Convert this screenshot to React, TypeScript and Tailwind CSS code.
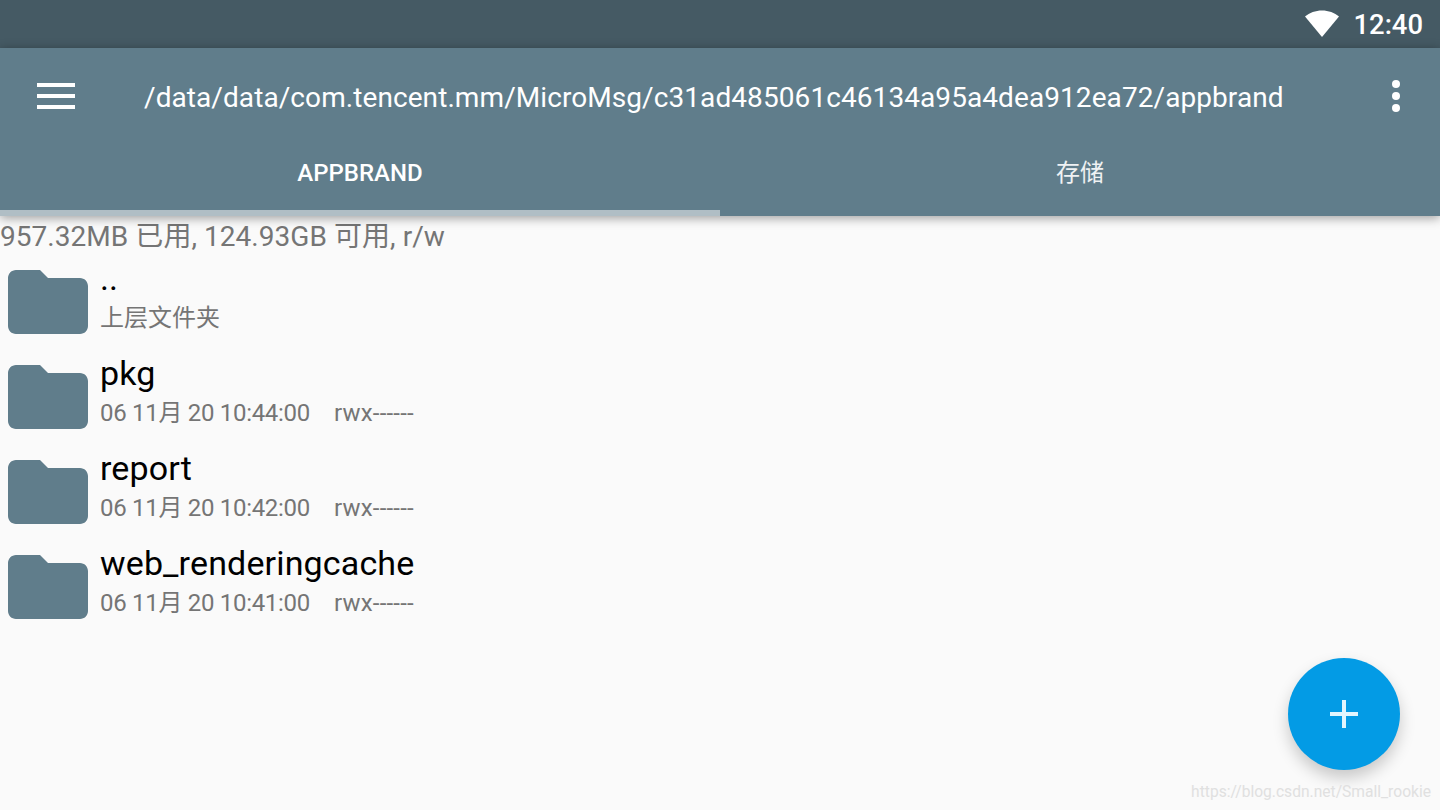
const FONT = "font-['Roboto','Noto_Sans_CJK_SC',sans-serif]"

const rows = [
  { name: '..', meta: '上层文件夹', perms: '' },
  { name: 'pkg', meta: '06 11月 20 10:44:00', perms: 'rwx------' },
  { name: 'report', meta: '06 11月 20 10:42:00', perms: 'rwx------' },
  { name: 'web_renderingcache', meta: '06 11月 20 10:41:00', perms: 'rwx------' },
]

function FolderIcon() {
  return (
    <svg width="96" height="96" viewBox="0 0 24 24" className="shrink-0" fill="#607d8b">
      <path d="M10 4H4c-1.1 0-2 .9-2 2v12c0 1.1.9 2 2 2h16c1.1 0 2-.9 2-2V8c0-1.1-.9-2-2-2h-8l-2-2z" />
    </svg>
  )
}

export default function App() {
  return (
    <div className={`${FONT} relative flex h-[810px] w-[1440px] flex-col overflow-hidden bg-[#fafafa]`}>
      <div className="flex h-12 items-center justify-end bg-[#455a64] pr-[17px]">
        <svg width="36" height="30" viewBox="0 0 36 30" fill="#fff" className="mr-[14px] mt-[-1px]">
          <path d="M18 28 1 7.5C5.5 3.8 11.5 1.5 18 1.5s12.5 2.3 17 6L18 28z" />
        </svg>
        <span className="pt-[3px] text-[27.4px] font-medium leading-none text-white">12:40</span>
      </div>

      <div className="relative z-10 bg-[#607d8b] shadow-[0_2px_10px_rgba(0,0,0,0.38)]">
        <div className="flex h-24 items-center">
          <div className="ml-[37px] flex w-[38px] flex-col gap-[7px]">
            <div className="h-1 bg-white" />
            <div className="h-1 bg-white" />
            <div className="h-1 bg-white" />
          </div>
          <div className="ml-[69px] flex-1 whitespace-nowrap pt-1 text-[28px] leading-none tracking-[0.08px] text-white">
            /data/data/com.tencent.mm/MicroMsg/c31ad485061c46134a95a4dea912ea72/appbrand
          </div>
          <div className="mr-[40px] flex flex-col gap-[4px]">
            <div className="h-2 w-2 rounded-full bg-white" />
            <div className="h-2 w-2 rounded-full bg-white" />
            <div className="h-2 w-2 rounded-full bg-white" />
          </div>
        </div>
        <div className="flex h-[72px]">
          <div className="flex w-[720px] items-center justify-center border-b-[6px] border-[#b0bec5] pb-2 text-[24px] font-medium text-white">
            APPBRAND
          </div>
          <div className="flex w-[720px] items-center justify-center pb-[14px] text-[24px] text-white/90">存储</div>
        </div>
      </div>

      <div className="mt-[3px] h-[35px] text-[28px] leading-[35px] tracking-[0.05px] whitespace-nowrap text-[#757575]">
        957.32MB 已用, 124.93GB 可用, r/w
      </div>

      <div className="flex flex-col">
        {rows.map((row) => (
          <div key={row.name} className="flex h-[95px] items-center">
            <FolderIcon />
            <div className="ml-1 mt-[-16px] flex flex-col">
              <div className="mt-[-1px] h-[49px] text-[34px] leading-[48px] tracking-[0.15px] text-black">{row.name}</div>
              <div className="flex h-[30px] text-[24px] leading-[30px] text-[#757575]">
                <span className={row.perms ? 'w-[234px] tracking-[-0.3px]' : 'w-[234px]'}>{row.meta}</span>
                <span className="tracking-[0.2px]">{row.perms}</span>
              </div>
            </div>
          </div>
        ))}
      </div>

      <div className="absolute left-[1288px] top-[658px] flex h-28 w-28 items-center justify-center rounded-full bg-[#039be5] shadow-[0_8px_16px_rgba(0,0,0,0.2)]">
        <svg width="28" height="28" viewBox="0 0 28 28" fill="#e1f5fe">
          <path d="M12 0h4v12h12v4H16v12h-4V16H0v-4h12z" />
        </svg>
      </div>

      <div className="absolute right-[9px] top-[782px] text-[15.6px] leading-5 text-[#e0e0e0]">
        https://blog.csdn.net/Small_rookie
      </div>
    </div>
  )
}
